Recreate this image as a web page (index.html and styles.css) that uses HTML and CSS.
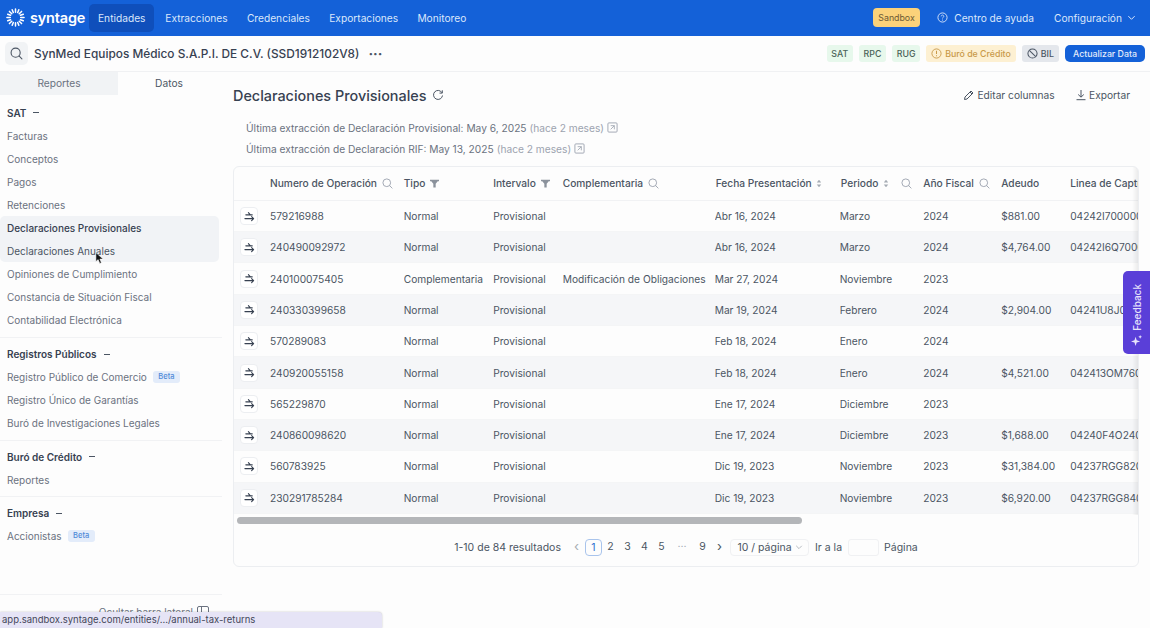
FILE: index.html
```html
<!DOCTYPE html>
<html lang="es">
<head>
<meta charset="utf-8">
<title>Syntage</title>
<link rel="stylesheet" href="styles.css">
</head>
<body>
<svg class="defs" width="0" height="0" aria-hidden="true">
  <symbol id="i-search" viewBox="0 0 12 12"><circle cx="5.2" cy="5.2" r="4.200" fill="none" stroke="currentColor" stroke-width="1"/><path d="M8.300 8.300 11 11" fill="none" stroke="currentColor" stroke-width="1" stroke-linecap="round"/></symbol>
  <symbol id="i-filter" viewBox="0 0 10 10"><path d="M0 .8h10v1.700H8.600L6.300 5.400v4H3.700v-4L1.400 2.500H0z" fill="currentColor"/></symbol>
  <symbol id="i-sort" viewBox="0 0 8 12"><path d="M4 1 7 4.600H1zM4 11 1 7.400h6z" fill="currentColor"/></symbol>
  <symbol id="i-swap" viewBox="0 0 12 12"><path d="M2 4.200h7M4.800 1.800 7 4.200M1 8.300h9.500M8.300 6.100l2.200 2.200-2.200 2.200" fill="none" stroke="currentColor" stroke-width="1.200" stroke-linecap="round" stroke-linejoin="round"/></symbol>
  <symbol id="i-open" viewBox="0 0 12 12"><rect x="1" y="1" width="10" height="10" rx="1" fill="none" stroke="currentColor"/><path d="M4 4h4v4M8 4 4 8" fill="none" stroke="currentColor" stroke-width=".9"/></symbol>
</svg>

<header class="topbar">
  <div class="logo">
    <svg class="logo-mark" viewBox="0 0 20 20"><g stroke="#fff" stroke-width="1.600" stroke-linecap="round"><path d="M10 1v3.500M10 15.500V19M1 10h3.500M15.500 10H19M3.600 3.600l2.500 2.500M13.900 13.900l2.500 2.500M16.400 3.600l-2.500 2.500M6.100 13.900l-2.500 2.500M6.500 1.800l1.200 3M12.300 15.200l1.200 3M13.500 1.800l-1.200 3M7.700 15.200l-1.200 3M1.800 6.500l3 1.200M15.200 12.300l3 1.200M18.200 6.500l-3 1.200M4.800 12.300l-3 1.200"/></g></svg>
    <span class="logo-text">syntage</span>
  </div>
  <nav class="nav">
    <a class="nav-item is-active">Entidades</a>
    <a class="nav-item">Extracciones</a>
    <a class="nav-item">Credenciales</a>
    <a class="nav-item">Exportaciones</a>
    <a class="nav-item">Monitoreo</a>
  </nav>
  <div class="top-right">
    <span class="sandbox">Sandbox</span>
    <a class="help"><svg class="help-icon" viewBox="0 0 12 12"><circle cx="6" cy="6" r="5" fill="none" stroke="currentColor"/><path d="M4.600 4.700a1.400 1.400 0 1 1 2.200 1.200c-.5.300-.8.600-.8 1.100" fill="none" stroke="currentColor" stroke-width=".9"/><circle cx="6" cy="8.700" r=".6" fill="currentColor"/></svg>Centro de ayuda</a>
    <a class="config">Configuración<svg class="chev" viewBox="0 0 10 10"><path d="M1.500 3.500 5 7l3.500-3.500" fill="none" stroke="currentColor" stroke-width="1.100"/></svg></a>
  </div>
</header>

<section class="subbar">
  <span class="search-btn"><svg class="ic13"><use href="#i-search"/></svg></span>
  <h1 class="company">SynMed Equipos Médico S.A.P.I. DE C.V. (SSD1912102V8)</h1>
  <span class="dots">···</span>
  <div class="badges">
    <span class="badge green">SAT</span>
    <span class="badge green">RPC</span>
    <span class="badge green">RUG</span>
    <span class="badge amber"><svg class="ic11" viewBox="0 0 12 12"><circle cx="6" cy="6" r="5" fill="none" stroke="currentColor"/><path d="M6 3v3.600M6 8v1" stroke="currentColor" stroke-width="1.100"/></svg>Buró de Crédito</span>
    <span class="badge grey"><svg class="ic11" viewBox="0 0 12 12"><circle cx="6" cy="6" r="5" fill="none" stroke="currentColor" stroke-width="1.100"/><path d="M2.500 2.500l7 7" stroke="currentColor" stroke-width="1.100"/></svg>BIL</span>
    <button class="update">Actualizar Data</button>
  </div>
</section>

<div class="body">
  <aside class="sidebar">
    <div class="tabs"><span class="tab tab-off">Reportes</span><span class="tab">Datos</span></div>
    <div class="groups">
      <div class="group">
        <div class="group-title">SAT <i class="dash"></i></div>
        <a class="link">Facturas</a>
        <a class="link">Conceptos</a>
        <a class="link">Pagos</a>
        <a class="link">Retenciones</a>
        <a class="link current">Declaraciones Provisionales</a>
        <a class="link hover">Declaraciones Anuales<svg class="cursor" viewBox="0 0 10 14"><path d="M1 1v10l2.500-2.200L5.300 13l1.800-.8-1.700-4H9z" fill="#111" stroke="#fff" stroke-width=".6"/></svg></a>
        <a class="link">Opiniones de Cumplimiento</a>
        <a class="link">Constancia de Situación Fiscal</a>
        <a class="link">Contabilidad Electrónica</a>
      </div>
      <div class="group">
        <div class="group-title">Registros Públicos <i class="dash"></i></div>
        <a class="link">Registro Público de Comercio <span class="beta">Beta</span></a>
        <a class="link">Registro Único de Garantías</a>
        <a class="link">Buró de Investigaciones Legales</a>
      </div>
      <div class="group">
        <div class="group-title">Buró de Crédito <i class="dash"></i></div>
        <a class="link">Reportes</a>
      </div>
      <div class="group">
        <div class="group-title">Empresa <i class="dash"></i></div>
        <a class="link">Accionistas <span class="beta">Beta</span></a>
      </div>
    </div>
    <div class="side-foot">Ocultar barra lateral <svg class="ic12" viewBox="0 0 12 12"><rect x=".5" y=".5" width="11" height="11" rx="1.500" fill="none" stroke="currentColor"/><path d="M4.500 1v10" stroke="currentColor"/></svg></div>
  </aside>

  <main class="main">
    <div class="title-row">
      <h2 class="title">Declaraciones Provisionales</h2>
      <svg class="refresh" viewBox="0 0 12 12"><path d="M10 3.800A4.500 4.500 0 1 0 10.500 6.500M10.300 1.300v2.800H7.500" fill="none" stroke="currentColor" stroke-width="1"/></svg>
      <div class="actions">
        <a class="action"><svg class="ic12" viewBox="0 0 12 12"><path d="M1.500 10.500 2 8l6-6 2 2-6 6zM7 3l2 2" fill="none" stroke="currentColor"/></svg>Editar columnas</a>
        <a class="action"><svg class="ic12" viewBox="0 0 12 12"><path d="M6 1v7M3.200 5.500 6 8.200l2.800-2.700M1.500 10.700h9" fill="none" stroke="currentColor"/></svg>Exportar</a>
      </div>
    </div>
    <div class="extract">
      <p class="extract-line">Última extracción de Declaración Provisional: May 6, 2025<span class="muted">(hace 2 meses)</span><svg class="ic11 muted"><use href="#i-open"/></svg></p>
      <p class="extract-line">Última extracción de Declaración RIF: May 13, 2025<span class="muted">(hace 2 meses)</span><svg class="ic11 muted"><use href="#i-open"/></svg></p>
    </div>

    <div class="card">
      <div class="table-wrap">
        <table class="table">
          <colgroup><col class="c0"><col class="c1"><col class="c2"><col class="c3"><col class="c4"><col class="c5"><col class="c6"><col class="c7"><col class="c8"><col class="c9"></colgroup>
          <thead>
            <tr>
              <th></th>
              <th>Numero de Operación <svg class="th-i"><use href="#i-search"/></svg></th>
              <th>Tipo <svg class="th-f"><use href="#i-filter"/></svg></th>
              <th>Intervalo <svg class="th-f"><use href="#i-filter"/></svg></th>
              <th>Complementaria <svg class="th-i"><use href="#i-search"/></svg></th>
              <th class="shift">Fecha Presentación <svg class="th-s"><use href="#i-sort"/></svg></th>
              <th class="shift">Periodo <svg class="th-s"><use href="#i-sort"/></svg><svg class="th-i push"><use href="#i-search"/></svg></th>
              <th>Año Fiscal <svg class="th-i"><use href="#i-search"/></svg></th>
              <th>Adeudo</th>
              <th>Linea de Captura</th>
            </tr>
          </thead>
          <tbody>
            <tr><td><span class="swap"><svg class="ic11"><use href="#i-swap"/></svg></span></td><td>579216988</td><td>Normal</td><td>Provisional</td><td></td><td>Abr 16, 2024</td><td>Marzo</td><td>2024</td><td>$881.00</td><td>04242I70000000</td></tr>
            <tr><td><span class="swap"><svg class="ic11"><use href="#i-swap"/></svg></span></td><td>240490092972</td><td>Normal</td><td>Provisional</td><td></td><td>Abr 16, 2024</td><td>Marzo</td><td>2024</td><td>$4,764.00</td><td>04242I6Q700000</td></tr>
            <tr><td><span class="swap"><svg class="ic11"><use href="#i-swap"/></svg></span></td><td>240100075405</td><td>Complementaria</td><td>Provisional</td><td>Modificación de Obligaciones</td><td>Mar 27, 2024</td><td>Noviembre</td><td>2023</td><td></td><td></td></tr>
            <tr><td><span class="swap"><svg class="ic11"><use href="#i-swap"/></svg></span></td><td>240330399658</td><td>Normal</td><td>Provisional</td><td></td><td>Mar 19, 2024</td><td>Febrero</td><td>2024</td><td>$2,904.00</td><td>04241U8J000000</td></tr>
            <tr><td><span class="swap"><svg class="ic11"><use href="#i-swap"/></svg></span></td><td>570289083</td><td>Normal</td><td>Provisional</td><td></td><td>Feb 18, 2024</td><td>Enero</td><td>2024</td><td></td><td></td></tr>
            <tr><td><span class="swap"><svg class="ic11"><use href="#i-swap"/></svg></span></td><td>240920055158</td><td>Normal</td><td>Provisional</td><td></td><td>Feb 18, 2024</td><td>Enero</td><td>2024</td><td>$4,521.00</td><td>042413OM760000</td></tr>
            <tr><td><span class="swap"><svg class="ic11"><use href="#i-swap"/></svg></span></td><td>565229870</td><td>Normal</td><td>Provisional</td><td></td><td>Ene 17, 2024</td><td>Diciembre</td><td>2023</td><td></td><td></td></tr>
            <tr><td><span class="swap"><svg class="ic11"><use href="#i-swap"/></svg></span></td><td>240860098620</td><td>Normal</td><td>Provisional</td><td></td><td>Ene 17, 2024</td><td>Diciembre</td><td>2023</td><td>$1,688.00</td><td>04240F4O240000</td></tr>
            <tr><td><span class="swap"><svg class="ic11"><use href="#i-swap"/></svg></span></td><td>560783925</td><td>Normal</td><td>Provisional</td><td></td><td>Dic 19, 2023</td><td>Noviembre</td><td>2023</td><td>$31,384.00</td><td>04237RGG820000</td></tr>
            <tr><td><span class="swap"><svg class="ic11"><use href="#i-swap"/></svg></span></td><td>230291785284</td><td>Normal</td><td>Provisional</td><td></td><td>Dic 19, 2023</td><td>Noviembre</td><td>2023</td><td>$6,920.00</td><td>04237RGG840000</td></tr>
          </tbody>
        </table>
        <div class="edge-shadow"></div>
      </div>
      <div class="scroll-track"><div class="scroll-thumb"></div></div>
      <div class="pager">
        <span class="count">1-10 de 84 resultados</span>
        <span class="pg arrow dim">‹</span>
        <span class="pg pg-on">1</span>
        <span class="pg">2</span><span class="pg">3</span><span class="pg">4</span><span class="pg">5</span>
        <span class="pg pg-more dim">···</span>
        <span class="pg">9</span>
        <span class="pg arrow">›</span>
        <span class="size">10 / página<svg class="chev-sm" viewBox="0 0 10 10"><path d="M1.500 3.500 5 7l3.500-3.500" fill="none" stroke="currentColor"/></svg></span>
        <span class="goto">Ir a la</span>
        <span class="goto-box"></span>
        <span class="goto">Página</span>
      </div>
    </div>
  </main>
</div>

<a class="feedback"><svg class="spark" viewBox="0 0 12 12"><path d="M5 2 6.200 5.800 10 7 6.200 8.200 5 12 3.800 8.200 0 7 3.800 5.800zM10 0l.6 1.400L12 2l-1.400.6L10 4l-.6-1.400L8 2l1.400-.6z" fill="currentColor"/></svg><span>Feedback</span></a>
<div class="status">app.sandbox.syntage.com/entities/.../annual-tax-returns</div>
</body>
</html>
```
FILE: styles.css
```css
* { box-sizing: border-box; }
html, body { margin: 0; height: 100%; }
body {
  width: 1150px; height: 628px; overflow: hidden; position: relative;
  font-family: Inter, "Liberation Sans", sans-serif; font-size: 10.2px;
  color: #4b5563; background: #fdfdfd;
  display: flex; flex-direction: column;
}
.defs { position: absolute; }
a { color: inherit; text-decoration: none; }
h1, h2, p { margin: 0; font-weight: 500; }
svg { flex: none; }
.ic11 { width: 11px; height: 11px; }
.ic12 { width: 12px; height: 12px; }
.ic13 { width: 13px; height: 13px; }

.topbar {
  flex: none; height: 36px; background: #1461d8; color: #dbe7fb;
  display: flex; align-items: center; padding: 0 14px 1px 6px;
}
.logo { display: flex; align-items: center; gap: 5px; width: 83px; color: #fff; }
.logo-mark { width: 19px; height: 19px; }
.logo-text { font-size: 14.5px; font-weight: 600; letter-spacing: -.2px; }
.nav { display: flex; align-items: center; gap: 3.300px; }
.nav-item { padding: 0 7.500px; height: 28px; line-height: 28px; border-radius: 5px; margin-right: 1px; }
.nav-item.is-active { background: #0f4fbb; padding: 0 9px; margin-right: 0; }
.top-right { margin-left: auto; display: flex; align-items: center; }
.sandbox { background: #fbd27a; color: #6b5a35; font-size: 8.800px; height: 19px; line-height: 19px; padding: 0 5.500px; border-radius: 4px; margin-right: 17px; }
.help { display: flex; align-items: center; gap: 6px; margin-right: 20px; }
.help-icon { width: 11px; height: 11px; }
.config { display: flex; align-items: center; gap: 5px; }
.chev { width: 9px; height: 9px; }

.subbar {
  flex: none; height: 36px; display: flex; align-items: center; padding: 0 5px;
  border-bottom: 1px solid #f0f1f3; background: #fdfdfd;
}
.search-btn { width: 23px; height: 23px; border-radius: 5px; background: #f1f3f5; display: flex; align-items: center; justify-content: center; color: #4b5563; margin-right: 6px; }
.company { font-size: 11.850px; font-weight: 500; color: #374151; }
.dots { margin-left: 9px; font-size: 14px; font-weight: 700; color: #4b5563; line-height: 10px; }
.badges { margin-left: auto; display: flex; align-items: center; gap: 6px; }
.badge { height: 17px; display: flex; align-items: center; gap: 3px; padding: 0 5px; border-radius: 3px; font-size: 8.800px; font-weight: 500; }
.green { background: #e7f8ec; color: #4b6358; padding: 0 4.700px; }
.amber { background: #fdf0d2; color: #c99a4a; }
.grey { background: #e4e7ec; color: #4b5563; }
.update { height: 17px; padding: 0 8px; border: 0; border-radius: 5px; background: #1461d8; color: #e3ecfb; font: 500 8.800px Inter, "Liberation Sans", sans-serif; }

.body { flex: 1; display: flex; min-height: 0; }
.sidebar { flex: none; width: 222px; display: flex; flex-direction: column; font-size: 10px; }
.tabs { display: flex; height: 23px; margin-bottom: 6.300px; font-size: 10.200px; }
.tab { width: 102px; text-align: center; line-height: 23px; color: #4b5563; }
.tab-off { width: 118px; background: #f1f3f5; color: #6b7280; }
.group { padding: 0 0 5px; border-bottom: 1px solid #f1f2f4; margin-bottom: 4.800px; }
.group:first-child { padding-bottom: 6px; }
.group:last-child { border-bottom: 0; }
.group-title { height: 22.800px; padding-left: 7px; font-weight: 600; color: #374151; display: flex; align-items: center; gap: 7px; }
.dash { width: 6px; height: 1px; background: #4b5563; }
.link { display: flex; align-items: center; gap: 6px; height: 23px; padding-left: 7px; color: #6b7280; position: relative; }
.current { background: #f1f3f6; color: #374151; font-weight: 500; border-radius: 5px 5px 0 0; margin-right: 3px; }
.hover { background: #f1f3f6; color: #4b5563; border-radius: 0 0 5px 5px; margin-right: 3px; }
.cursor { position: absolute; left: 95px; top: 12px; width: 9px; height: 14px; }
.beta { background: #e3ecfa; color: #4f8ad8; font-size: 7.500px; font-weight: 500; height: 12px; line-height: 12px; padding: 0 5.500px; border-radius: 3px; }
.side-foot { margin-top: auto; height: 34px; display: flex; justify-content: flex-end; align-items: flex-start; gap: 4px; padding: 11px 13px 0 0; color: #6b7280; border-top: 1px solid #f1f2f4; }

.main { flex: 1; min-width: 0; padding: 0 11px; }
.title-row { height: 46px; display: flex; align-items: center; }
.title { font-size: 14.400px; font-weight: 500; color: #374151; }
.refresh { width: 12px; height: 12px; margin-left: 5px; color: #4b5563; }
.actions { margin-left: auto; display: flex; gap: 20px; margin-right: 9px; }
.action { display: flex; align-items: center; gap: 2.500px; color: #4b5563; }
.extract { padding-left: 13px; height: 46px; margin-top: -1px; margin-bottom: 3px; }
.extract-line { height: 21px; display: flex; align-items: center; gap: 3px; font-weight: 400; color: #6b7280; white-space: nowrap; }
.muted { color: #9ca3af; }

.card { height: 401px; border: 1px solid #eceef1; border-radius: 6px; background: #fdfdfd; overflow: hidden; }
.table-wrap { position: relative; overflow: hidden; height: 348px; }
.table { table-layout: fixed; border-collapse: collapse; width: 960px; }
.c0 { width: 36px; } .c1 { width: 133.700px; } .c2 { width: 89.500px; } .c3 { width: 69.500px; } .c4 { width: 152px; }
.c5 { width: 125px; } .c6 { width: 83.500px; } .c7 { width: 78px; } .c8 { width: 69px; } .c9 { width: 124px; }
th { height: 33.400px; text-align: left; font-weight: 500; color: #4b5563; padding: 0; white-space: nowrap; border-bottom: 1px solid #f1f2f4; }
th.shift { padding-left: 1px; }
td { height: 31.300px; padding: 0; white-space: nowrap; overflow: hidden; color: #4b5563; border-bottom: 1px solid #f4f5f6; }
tbody tr:nth-child(even) td { background: #f5f6f8; }
.th-i { width: 11px; height: 11px; color: #9ca3af; margin-left: 2px; vertical-align: -2px; }
.th-f { width: 9px; height: 9px; color: #8b929c; margin-left: 2px; vertical-align: -1px; }
.th-s { width: 6px; height: 9px; color: #a5abb3; margin-left: 2px; vertical-align: -1px; }
.push { margin-left: 12px; }
.swap { width: 18px; height: 18px; margin-left: 6px; border: 1px solid #eceef1; border-radius: 4px; background: #fff; display: flex; align-items: center; justify-content: center; color: #374151; }
.edge-shadow { position: absolute; right: 0; top: 0; bottom: 0; width: 6px; background: linear-gradient(to right, rgba(0,0,0,0), rgba(0,0,0,.07)); }
.scroll-track { height: 12px; padding: 2px 2px 2px 3px; }
.scroll-thumb { width: 565px; height: 7px; border-radius: 3.500px; background: #b4b6b9; }
.pager { height: 40px; display: flex; align-items: center; justify-content: center; font-size: 10.500px; color: #4b5563; }
.count { margin-right: 7px; }
.pg { min-width: 17px; height: 17px; line-height: 16px; text-align: center; }
.arrow { font-size: 13px; line-height: 15px; }
.pg-more { min-width: 24px; }
.dim { color: #a5abb3; }
.pg-on { border: 1px solid #a9c4ec; border-radius: 4px; color: #2f6fd0; }
.size { display: flex; align-items: center; gap: 3px; height: 17px; padding: 0 5px 0 6px; border: 1px solid #f0f1f3; border-radius: 4px; margin: 0 6.500px 0 2.500px; }
.chev-sm { width: 8px; height: 8px; color: #a5abb3; }
.goto-box { width: 31px; height: 17px; border: 1px solid #f0f1f3; border-radius: 3px; margin: 0 5.500px; }

.feedback { position: absolute; right: 0; top: 271px; width: 27px; height: 83px; background: #5a3fd8; color: #e6e2fb; border-radius: 5px 0 0 5px; display: flex; flex-direction: column-reverse; align-items: center; justify-content: flex-start; padding: 8px 0; gap: 4px; font-size: 10px; font-weight: 500; }
.feedback span { writing-mode: vertical-rl; transform: rotate(180deg); }
.spark { width: 11px; height: 11px; }
.status { position: absolute; left: 0; bottom: 0; width: 382px; height: 16px; line-height: 16px; padding-left: 2px; background: #e6e4f6; color: #44475a; border-radius: 0 4px 0 0; font-size: 9.500px; box-shadow: 0 0 2px rgba(0,0,0,.25); }
```
